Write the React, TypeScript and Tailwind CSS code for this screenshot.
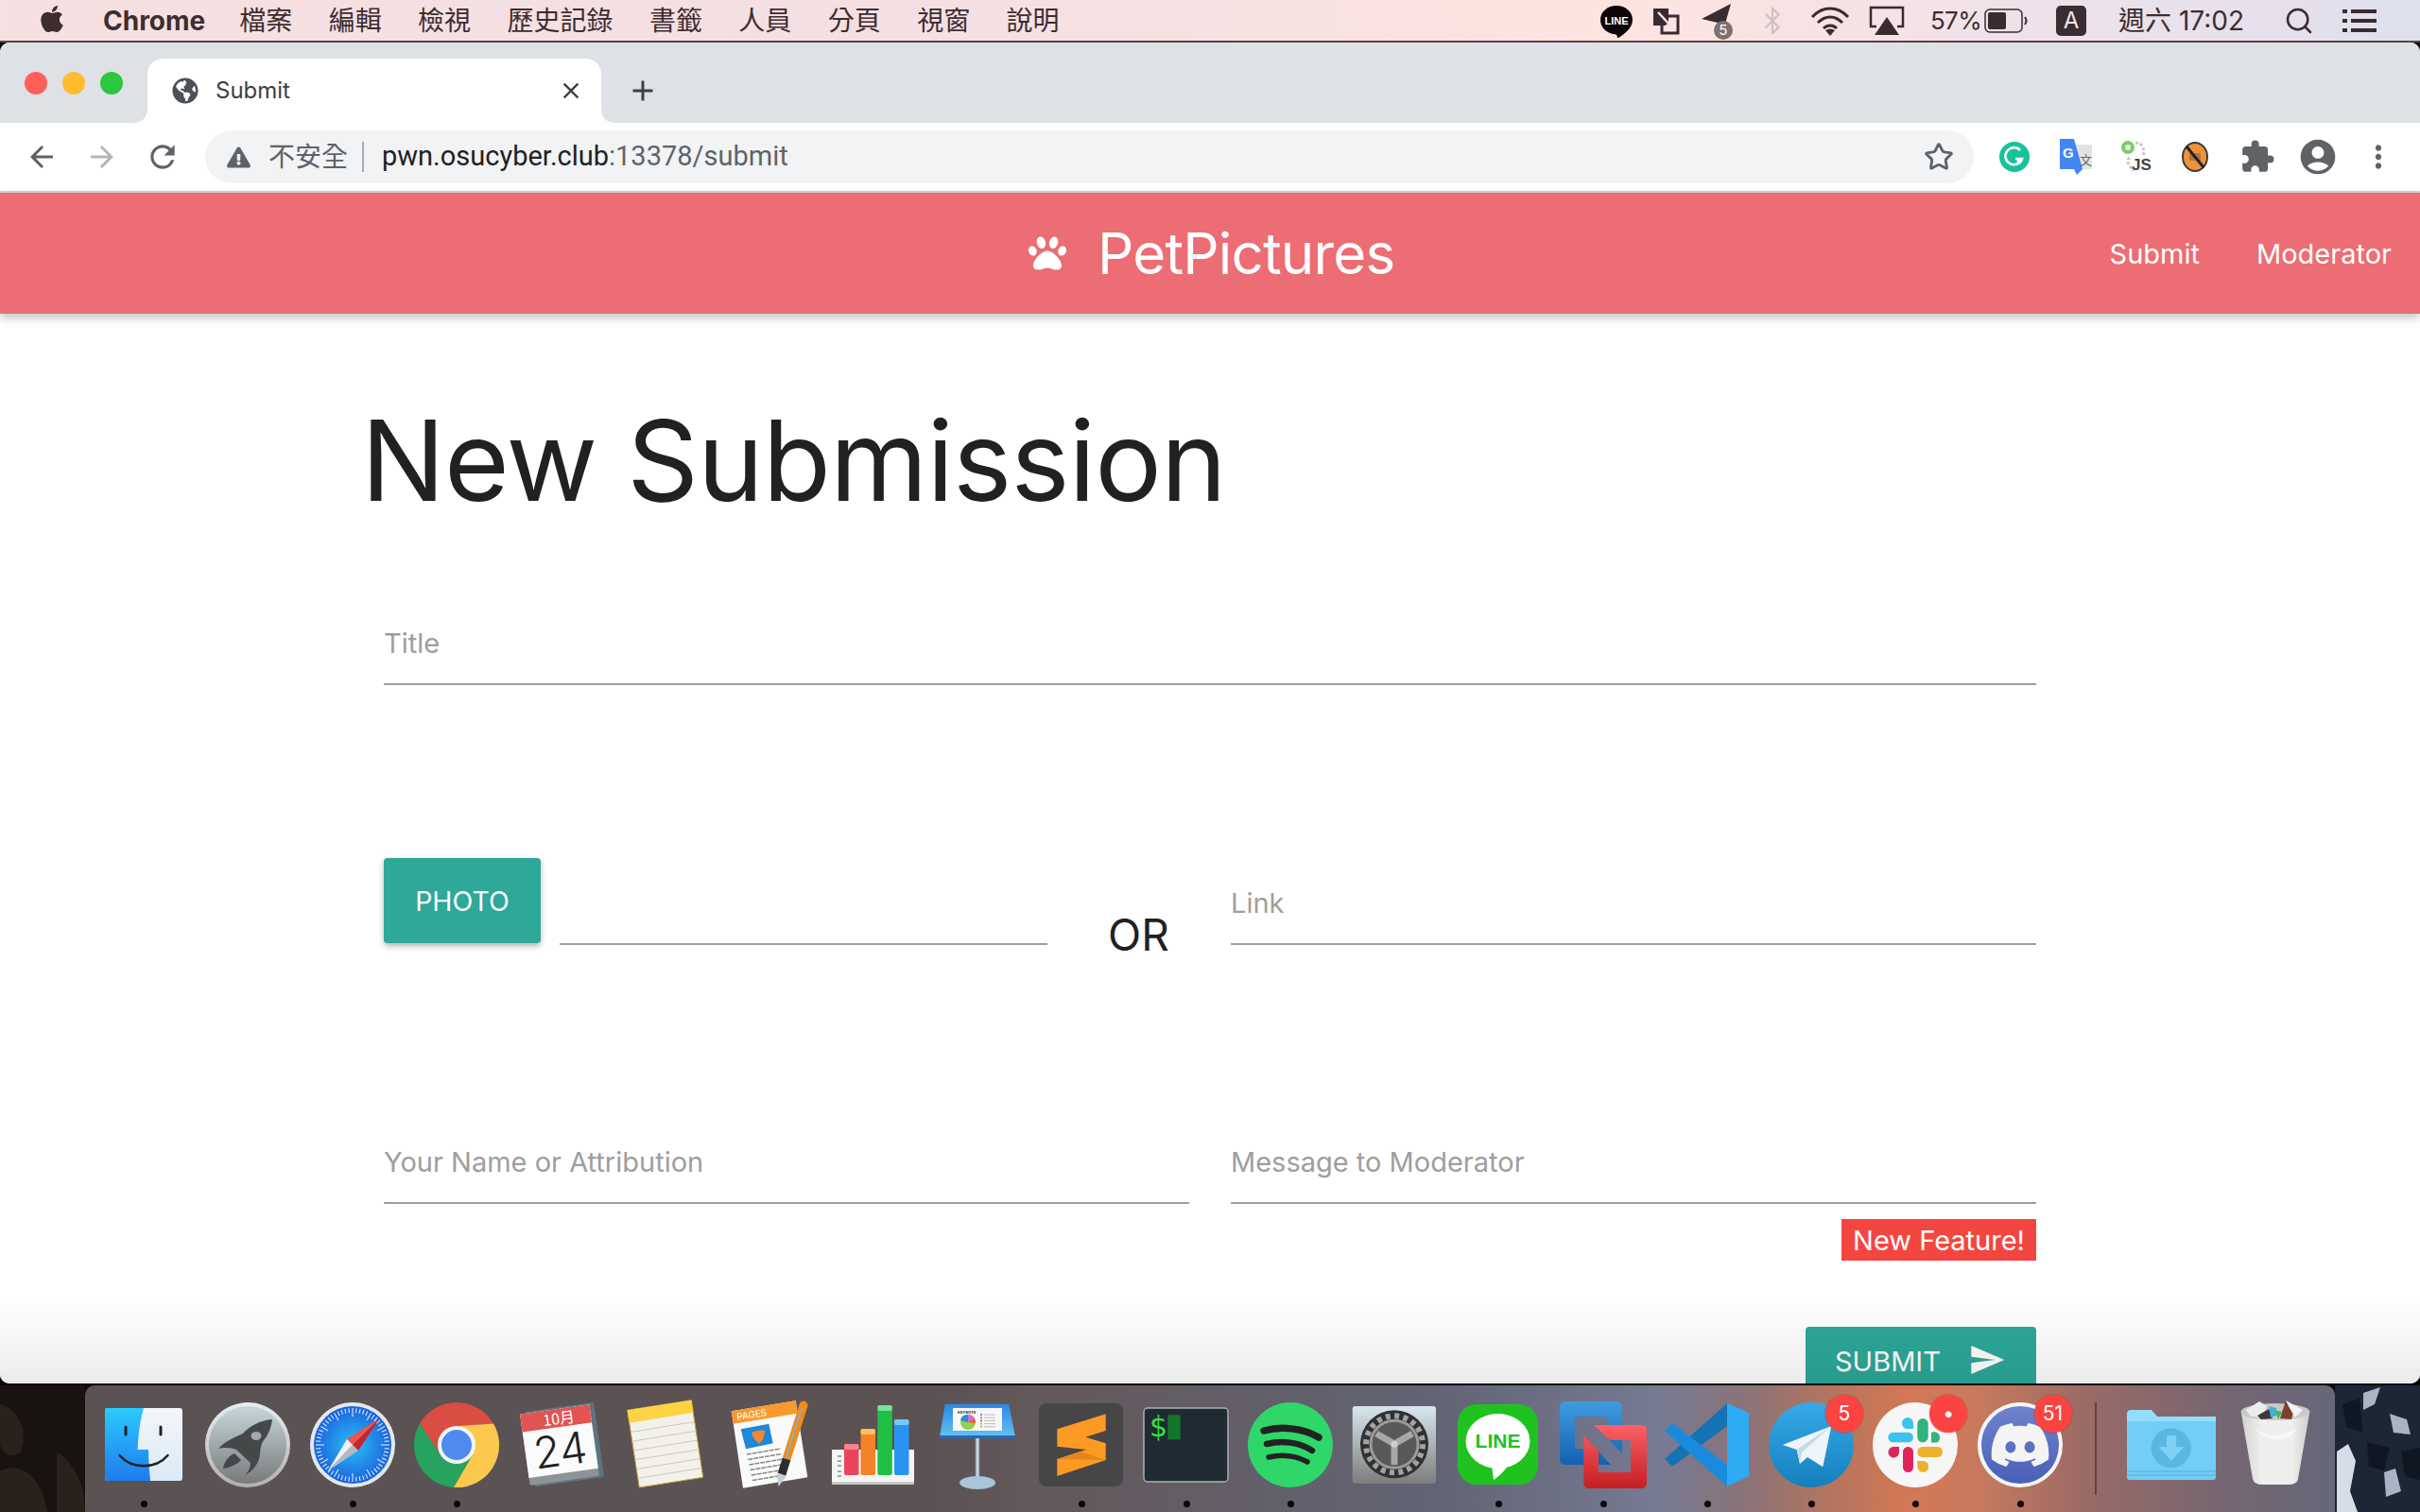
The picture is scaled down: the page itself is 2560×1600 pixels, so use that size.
import React from 'react';
import { FaApple, FaPaw, FaGlobeAmericas, FaDiscord, FaExclamationTriangle } from 'react-icons/fa';
import { MdSend, MdAccountCircle, MdMoreVert, MdRefresh, MdArrowBack, MdArrowForward, MdClose, MdAdd, MdExtension } from 'react-icons/md';
import { Star, Search, Bluetooth } from 'lucide-react';

const menuItems = ['檔案', '編輯', '檢視', '歷史記錄', '書籤', '人員', '分頁', '視窗', '說明'];
const cjk = "font-['Inter','Noto_Sans_CJK_TC',sans-serif]";

const Finder = () => (
  <>
    <defs>
      <linearGradient id="fb" x1="0" y1="0" x2="0" y2="1"><stop offset="0" stopColor="#2bcafd" /><stop offset="1" stopColor="#1f7bef" /></linearGradient>
      <linearGradient id="fw" x1="0" y1="0" x2="0" y2="1"><stop offset="0" stopColor="#f5f6f8" /><stop offset="1" stopColor="#d9eaf7" /></linearGradient>
    </defs>
    <rect x="14" y="24" width="82" height="77" rx="3" fill="url(#fw)" />
    <path d="M17,24 H55 C51,38 49,53 48.7,68 H60 C60,80 61,90 62,101 H17 Q14,101 14,98 V27 Q14,24 17,24Z" fill="url(#fb)" />
    <path d="M36,44 V52 M73,44 V52" stroke="#222" strokeWidth="3" strokeLinecap="round" />
    <path d="M29.5,74 C42,89 68,89 80.5,74" stroke="#222" strokeWidth="2.5" fill="none" strokeLinecap="round" />
  </>
);

const Launchpad = () => (
  <>
    <defs>
      <linearGradient id="lr" x1="0" y1="0" x2="0" y2="1"><stop offset="0" stopColor="#e6eef0" /><stop offset="1" stopColor="#b0b0b0" /></linearGradient>
      <linearGradient id="li" x1="0" y1="0" x2="0" y2="1"><stop offset="0" stopColor="#c6d6da" /><stop offset="1" stopColor="#797a7a" /></linearGradient>
    </defs>
    <circle cx="55" cy="63" r="45" fill="url(#lr)" />
    <circle cx="55" cy="63" r="41" fill="url(#li)" />
    <path d="M81,36 C68,37 57,43 50,51 C42,54 30,60 24,67 C32,65 38,66 43,68 L58,82 C58,88 55,92 52,95 C60,91 66,84 68,74 C68,68 69,62 72,58 C77,52 80,44 81,36Z" fill="#454849" />
    <ellipse cx="64" cy="53.5" rx="5.5" ry="4.5" fill="#a3a9a9" />
    <path d="M29,88 C30,80 36,74 41,72 L48,79 C44,84 36,87 29,88Z" fill="#454849" />
  </>
);

const Safari = () => (
  <>
    <defs>
      <radialGradient id="sb"><stop offset="0" stopColor="#2bc0f5" /><stop offset="1" stopColor="#1a62dd" /></radialGradient>
    </defs>
    <circle cx="55" cy="63" r="45" fill="#e4e8ea" />
    <circle cx="55" cy="63" r="41" fill="url(#sb)" />
    {Array.from({ length: 60 }).map((_, i) => {
      const a = (i * Math.PI) / 30;
      const r0 = i % 5 === 0 ? 30 : 34;
      return (
        <line key={i} x1={55 + r0 * Math.cos(a)} y1={63 + r0 * Math.sin(a)} x2={55 + 39 * Math.cos(a)} y2={63 + 39 * Math.sin(a)} stroke="#fff" strokeWidth="1.2" opacity="0.8" />
      );
    })}
    <polygon points="83.7,34.7 49,57 55,63" fill="#f4504a" />
    <polygon points="83.7,34.7 61,69 55,63" fill="#c8232c" />
    <polygon points="28.7,90.7 49,57 55,63" fill="#f1f1f1" />
    <polygon points="28.7,90.7 61,69 55,63" fill="#b3bac3" />
  </>
);

const Chrome = () => (
  <>
    <path d="M16,40.5 A45,45 0 0 1 94,40.5 L55,43 L37.7,73 Z" fill="#da4d43" />
    <path d="M16,40.5 A45,45 0 0 0 52,108 L72.3,73 L37.7,73 Z" fill="#26a35f" />
    <path d="M94,40.5 A45,45 0 0 1 52,108 L72.3,73 L55,43 Z" fill="#fdc94d" />
    <circle cx="55" cy="63" r="20" fill="#f3f3f3" />
    <circle cx="55" cy="63" r="16" fill="#4f8bee" />
  </>
);

const Calendar = () => (
  <g transform="rotate(-8 55 63)">
    <rect x="22" y="23" width="74" height="80" rx="2" fill="#5e7380" />
    <rect x="17" y="25" width="74" height="76" rx="2" fill="#8d9396" />
    <rect x="17" y="25" width="74" height="68" fill="#fbfbfb" />
    <rect x="17" y="25" width="74" height="19" fill="#e25353" />
    <text x="57" y="41" textAnchor="middle" fontSize="16" fill="#fff" fontFamily="'Noto Sans CJK TC',sans-serif">10月</text>
    <text x="54" y="85" textAnchor="middle" fontSize="46" fill="#222" fontFamily="Inter,sans-serif" fontWeight="300">24</text>
  </g>
);

const Notes = () => (
  <>
    <polygon points="15.7,26.3 83.3,15.7 95.7,97.3 28.3,108" fill="#f3f1ea" stroke="#c6a338" strokeWidth="1" />
    <polygon points="15.7,26.3 83.3,15.7 85.3,28.7 17.7,39.7" fill="#fed344" />
    {Array.from({ length: 6 }).map((_, i) => {
      const t = (i + 1) / 7;
      return (
        <line key={i} x1={17.7 + t * 10.6} y1={39.7 + t * 68.3} x2={85.3 + t * 10.4} y2={28.7 + t * 68.6} stroke="#c9c9c9" strokeWidth="1" />
      );
    })}
  </>
);

const Pages = () => (
  <>
    <polygon points="14.7,27.3 82.7,16.3 95.3,97.3 27,108.7" fill="#fafafa" />
    <polygon points="14.7,27.3 82.7,16.3 84.3,29.7 17,40.7" fill="#f99a2c" />
    <text x="21" y="37" fontSize="10" fill="#fff" transform="rotate(-9 21 37)" fontFamily="Inter,sans-serif">PAGES</text>
    <polygon points="24.7,46.3 54.3,40.7 58.7,61.3 30,67.3" fill="#1e87d8" />
    <path d="M36,50 C40,48 48,47 50,48 C50,54 48,58 44,62 C40,58 37,55 36,50Z" fill="#f4872a" />
    {[0, 1, 2, 3, 4, 5].map(i => (
      <line key={i} x1={31 + i * 1.2} y1={73 + i * 5.5} x2={67 + i * 1.2} y2={67 + i * 5.5} stroke="#888" strokeWidth="1.6" strokeDasharray="5 1" />
    ))}
    <line x1="91" y1="21" x2="73" y2="78" stroke="#f08c1c" strokeWidth="9" strokeLinecap="round" />
    <line x1="89" y1="24" x2="72" y2="78" stroke="#7fb2db" strokeWidth="1.5" />
    <line x1="73" y1="78" x2="68" y2="94" stroke="#2d2d2d" strokeWidth="9" />
    <polygon points="63,93 73,96 64.5,107" fill="#c6ced6" />
  </>
);

const Numbers = () => (
  <>
    <rect x="11" y="68" width="87" height="37" fill="#f5f5f5" />
    <rect x="11" y="102" width="87" height="3" fill="#c8c8c8" />
    {[74, 79, 84, 90, 95].map(y => <rect key={y} x="17" y={y} width="4" height="2" fill="#a5a5a5" />)}
    <rect x="24" y="62" width="15.5" height="33" rx="2" fill="#e8465c" />
    <rect x="24" y="62" width="15.5" height="6" rx="2" fill="#f9858c" />
    <rect x="41.5" y="46" width="15.5" height="49" rx="2" fill="#f58128" />
    <rect x="41.5" y="46" width="15.5" height="6" rx="2" fill="#fcc05e" />
    <rect x="59.3" y="21" width="15.5" height="74" rx="2" fill="#22bf46" />
    <rect x="59.3" y="21" width="15.5" height="6" rx="2" fill="#77e394" />
    <rect x="77" y="36" width="15.5" height="59" rx="2" fill="#2a94f4" />
    <rect x="77" y="36" width="15.5" height="6" rx="2" fill="#71cdf8" />
  </>
);

const Keynote = () => (
  <>
    <defs>
      <linearGradient id="kn" x1="0" y1="0" x2="0" y2="1"><stop offset="0" stopColor="#2c86e2" /><stop offset="1" stopColor="#64c1f4" /></linearGradient>
      <linearGradient id="ks" x1="0" y1="0" x2="1" y2="0"><stop offset="0" stopColor="#7b8f9f" /><stop offset="0.5" stopColor="#dfe6ea" /><stop offset="1" stopColor="#7b8f9f" /></linearGradient>
    </defs>
    <rect x="52.7" y="55" width="4.6" height="46" fill="url(#ks)" />
    <ellipse cx="55" cy="103" rx="19" ry="7" fill="#a9c5d8" />
    <polygon points="20.7,19.7 88.3,19.7 95,54.7 15,54.7" fill="url(#kn)" />
    <rect x="15" y="53" width="80" height="3" fill="#1a6cc6" />
    <rect x="29" y="24" width="52" height="24" fill="#f7f7f7" />
    <text x="34" y="30" fontSize="4" fontWeight="700" fill="#333" fontFamily="Inter,sans-serif">KEYNOTE</text>
    <circle cx="45" cy="39" r="8" fill="#8fd04f" />
    <path d="M45,39 L37,37 A8,8 0 0 1 45,31Z" fill="#2e87dd" />
    <path d="M45,39 L45,31 A8,8 0 0 1 52,35Z" fill="#d66bd6" />
    <path d="M45,39 L52,35 A8,8 0 0 1 53,40Z" fill="#f2554e" />
    {['#3c9be0', '#d66bd6', '#f2554e', '#f4a83a', '#8fd04f'].map((c, i) => (
      <g key={c}>
        <rect x="58" y={30 + i * 3.2} width="2" height="2" fill={c} />
        <rect x="62" y={30.5 + i * 3.2} width="12" height="1" fill="#bbb" />
      </g>
    ))}
  </>
);

const Sublime = () => (
  <>
    <rect x="10" y="19" width="89" height="88" rx="8" fill="#464646" />
    <polygon points="29.3,46.3 80.7,30.3 80.7,48 59.3,54.7 80.7,61.3 80.7,79 29.3,96 29.3,78 60,68 29.3,64.7" fill="#fd9a23" />
    <polygon points="29.3,78 54,70 80.7,79 80.7,79" fill="#e4861d" />
  </>
);

const Terminal = () => (
  <>
    <rect x="10" y="24" width="89" height="78" rx="4" fill="#1f2a33" stroke="#aab1b6" strokeWidth="1.5" />
    <text x="16" y="54" fontSize="30" fill="#37e03f" fontFamily="'DejaVu Sans',sans-serif">$</text>
    <rect x="35.3" y="31.3" width="13.4" height="26" fill="#14752a" />
  </>
);

const Spotify = () => (
  <>
    <circle cx="55" cy="63" r="45" fill="#2fd768" />
    <path d="M27,48 C45,43 68,45 85,55" stroke="#222" strokeWidth="7.5" fill="none" strokeLinecap="round" />
    <path d="M30,62 C46,58 64,60 78,69" stroke="#222" strokeWidth="6.5" fill="none" strokeLinecap="round" />
    <path d="M32,76 C45,73 60,74 73,81" stroke="#222" strokeWidth="5.5" fill="none" strokeLinecap="round" />
  </>
);

const SystemPrefs = () => (
  <>
    <defs>
      <linearGradient id="sp" x1="0" y1="0" x2="0" y2="1"><stop offset="0" stopColor="#d8e6ec" /><stop offset="1" stopColor="#7d7d7d" /></linearGradient>
    </defs>
    <rect x="10.7" y="22" width="88.3" height="82" rx="3" fill="url(#sp)" />
    <circle cx="55" cy="62.3" r="36" fill="#2f3133" />
    <circle cx="55" cy="62.3" r="30" fill="none" stroke="#a3a3a3" strokeWidth="6" strokeDasharray="5 4.42" />
    <circle cx="55" cy="62.3" r="25" fill="#595959" stroke="#9b9b9b" strokeWidth="3" />
    <path d="M55,62 L55,40 M55,62 L36,73 M55,62 L74,73" stroke="#a8a8a8" strokeWidth="7" transform="rotate(60 55 62)" />
    <circle cx="55" cy="62.3" r="3.5" fill="#d0d0d0" />
  </>
);

const Line = () => (
  <>
    <rect x="12" y="20" width="85" height="85" rx="20" fill="#1fc21f" />
    <ellipse cx="54.5" cy="59" rx="34" ry="29" fill="#fff" />
    <path d="M48,84 L50,100 C56,96 62,90 66,84Z" fill="#fff" />
    <text x="54.5" y="66" textAnchor="middle" fontSize="21" fontWeight="800" fill="#1fc21f" fontFamily="'Liberation Sans',sans-serif">LINE</text>
  </>
);

const VMware = () => (
  <>
    <defs>
      <linearGradient id="vb" x1="0" y1="0" x2="0" y2="1"><stop offset="0" stopColor="#3f9ce2" /><stop offset="1" stopColor="#1560b0" /></linearGradient>
      <linearGradient id="vr" x1="0" y1="0" x2="0" y2="1"><stop offset="0" stopColor="#fc6068" /><stop offset="1" stopColor="#c51e22" /></linearGradient>
    </defs>
    <path d="M15,17 H69 Q75,17 75,23 V72 L59,56 V33 H25 V67 H47 L63,84 H15 Q9,84 9,78 V23 Q9,17 15,17Z" fill="url(#vb)" />
    <path d="M34.3,53 L50,69 V92 H84 V58 H62 L45,42 H95 Q101,42 101,48 V103 Q101,109 95,109 H40 Q34.3,109 34.3,103Z" fill="url(#vr)" />
  </>
);

const VSCode = () => (
  <>
    <polygon points="10,78 18,86 76,43 76,19" fill="#1572b5" />
    <polygon points="10,48 18,40 76,84 76,107 " fill="#1a8bdc" />
    <polygon points="76,19 99,29 99,96 76,107" fill="#2fabf5" />
  </>
);

const Telegram = () => (
  <>
    <defs>
      <linearGradient id="tg" x1="0" y1="0" x2="0" y2="1"><stop offset="0" stopColor="#38a9e7" /><stop offset="1" stopColor="#1480bd" /></linearGradient>
    </defs>
    <circle cx="55" cy="63" r="45" fill="url(#tg)" />
    <polygon points="76.3,43 24.7,63 39.7,68 43,83 51,76 67.3,86.3" fill="#eef6fb" />
    <polygon points="76.3,43 39.7,68 43,83 45,71" fill="#c6dbe9" />
  </>
);

const Slack = () => (
  <>
    <circle cx="55" cy="63" r="45" fill="#f6f6f6" />
    <rect x="26.3" y="49.7" width="26.7" height="10.6" rx="5.3" fill="#3ec1ee" />
    <path d="M41,40 a5.8,5.8 0 1 1 12,0 V46 H46 A5.5,5.5 0 0 1 41,40Z" fill="#3ec1ee" />
    <rect x="57.3" y="35" width="11.4" height="25.3" rx="5.7" fill="#30b37c" />
    <path d="M72,50 a5.8,5.8 0 1 1 6,10.5 H72Z" fill="#30b37c" />
    <path d="M38,65 V70 A5.8,5.8 0 1 1 32,65Z" fill="#e0245e" />
    <rect x="42" y="65" width="11" height="27" rx="5.5" fill="#e0245e" />
    <rect x="57.3" y="65" width="26.7" height="11" rx="5.5" fill="#ecb22e" />
    <path d="M57.3,80 H63 A6,6 0 1 1 57.3,86Z" fill="#ecb22e" />
  </>
);

const Discord = () => (
  <>
    <defs>
      <linearGradient id="dc" x1="0" y1="0" x2="0" y2="1"><stop offset="0" stopColor="#6d83cc" /><stop offset="1" stopColor="#4a60b8" /></linearGradient>
    </defs>
    <circle cx="55" cy="63" r="45" fill="#f5f5f5" />
    <circle cx="55" cy="63" r="41" fill="url(#dc)" />
    <FaDiscord x="22" y="30" size={66} color="#f4f4f4" />
  </>
);

const Folder = () => (
  <>
    <path d="M8,30 Q8,26 12,26 H34 L40,33 H102 V44 H8Z" fill="#93deff" />
    <path d="M8,40 Q8,38 10,38 H100 Q102,38 102,40 V97 Q102,100 99,100 H11 Q8,100 8,97Z" fill="#72cdf7" />
    <rect x="8" y="90" width="94" height="2" fill="#62bde9" />
    <rect x="8" y="94" width="94" height="2" fill="#62bde9" />
    <circle cx="54.7" cy="66.3" r="21" fill="#5cb6e4" />
    <path d="M50,53 H60 V65 H68 L55,80 L42,65 H50Z" fill="#7fd0f5" />
  </>
);

const Trash = () => (
  <>
    <defs>
      <linearGradient id="tr" x1="0" y1="0" x2="1" y2="0"><stop offset="0" stopColor="#d2d2d2" /><stop offset="0.3" stopColor="#efefee" /><stop offset="0.75" stopColor="#eeeeed" /><stop offset="1" stopColor="#cfcfcf" /></linearGradient>
    </defs>
    <path d="M18.7,28 C18,26 92,26 91.3,28 L79,99 Q78,105 68,105 H42 Q32,105 31,99Z" fill="url(#tr)" />
    <ellipse cx="55" cy="28" rx="36.5" ry="9" fill="#c9c9c9" />
    <polygon points="24,26 38,17 46,22 42,35 28,32" fill="#ededed" />
    <polygon points="36,32 48,25 52,35 40,36" fill="#40373a" />
    <polygon points="48,22 56,24 56,32 50,34" fill="#3bb3d6" />
    <polygon points="60,35 66,16 74,28 72,36" fill="#7e3f30" />
    <polygon points="66,16 84,26 76,34 70,24" fill="#f3f3f3" />
    <polygon points="54,26 62,28 58,36" fill="#4fb45b" />
    <path d="M34,47 C50,55 62,55 78,45 L74,51 C60,61 46,59 34,47Z" fill="#fafafa" opacity="0.8" />
  </>
);

const dockItems: { icon: React.ReactNode; dot?: boolean; badge?: string }[] = [
  { icon: <Finder />, dot: true },
  { icon: <Launchpad /> },
  { icon: <Safari />, dot: true },
  { icon: <Chrome />, dot: true },
  { icon: <Calendar /> },
  { icon: <Notes /> },
  { icon: <Pages /> },
  { icon: <Numbers /> },
  { icon: <Keynote /> },
  { icon: <Sublime />, dot: true },
  { icon: <Terminal />, dot: true },
  { icon: <Spotify />, dot: true },
  { icon: <SystemPrefs /> },
  { icon: <Line />, dot: true },
  { icon: <VMware />, dot: true },
  { icon: <VSCode />, dot: true },
  { icon: <Telegram />, dot: true, badge: '5' },
  { icon: <Slack />, dot: true, badge: '•' },
  { icon: <Discord />, dot: true, badge: '51' },
];

const DockSlot = ({ icon, dot, badge }: { icon: React.ReactNode; dot?: boolean; badge?: string }) => (
  <div className="relative w-[110.25px] h-[134px] shrink-0">
    <svg width="110" height="134" viewBox="0 0 110 134">{icon}</svg>
    {dot && <div className="absolute left-[52px] top-[122px] w-[7px] h-[7px] rounded-full bg-[#0c0606]" />}
    {badge && (
      <div className="absolute left-[70px] top-[10px] w-[40px] h-[40px] rounded-full bg-[#fb4441] text-white text-[21px] flex items-center justify-center font-['Inter',sans-serif] shadow-[0_0_2px_rgba(0,0,0,0.3)]">
        {badge}
      </div>
    )}
  </div>
);

const Field = ({ label, className = '' }: { label: string; className?: string }) => (
  <div className={`h-[96px] border-b-2 border-[#9e9e9e] flex items-center pt-[9px] text-[29px] text-[#9e9e9e] ${className}`}>
    {label}
  </div>
);

const MenuBar = () => (
  <div className={`h-[45px] shrink-0 border-b-2 border-[#5b4247] flex items-center text-[#3d2d30] bg-[linear-gradient(90deg,#f6e0e1_0%,#f4dfe3_35%,#f9e2e2_55%,#fee4df_66%,#f3e2e8_80%,#dfe0ee_100%)] ${cjk}`}>
    <FaApple className="ml-[40px] w-[30px] h-[32px] -mt-[3px]" />
    <span className="ml-[39px] text-[28px] font-bold">Chrome</span>
    <div className="flex gap-[38.4px] ml-[36px] text-[28px]">
      {menuItems.map(m => <span key={m} className="leading-none">{m}</span>)}
    </div>
    <div className="ml-auto flex items-center h-full">
      <svg width="36" height="36" viewBox="0 0 36 36" className="mr-[20px]">
        <path d="M18,2 C27,2 35,8 35,17 C35,27 24,33 19,37 C19,33 18,32 14,32 C6,30 1,24 1,17 C1,8 9,2 18,2Z" fill="#0d0507" />
        <text x="18" y="22" textAnchor="middle" fontSize="11" fontWeight="700" fill="#fff" fontFamily="'Liberation Sans',sans-serif">LINE</text>
      </svg>
      <svg width="30" height="32" viewBox="0 0 30 32" className="mr-[21px]">
        <path d="M1,3 H17 V21 H1Z" fill="#3a2b30" />
        <path d="M10,11 H27 V29 H10Z" fill="none" stroke="#3a2b30" strokeWidth="3" />
        <path d="M6,7 L20,22 M14,21 H20 V15" stroke="#f7e3e3" strokeWidth="2.5" fill="none" />
      </svg>
      <div className="relative w-[34px] h-[40px] mr-[26px]">
        <svg width="34" height="30" viewBox="0 0 34 30"><path d="M1,18 L32,2 L24,30 L18,22Z" fill="#3a2b30" /></svg>
        <span className="absolute left-[14px] top-[20px] w-[20px] h-[20px] rounded-full bg-[#7f7070] text-[15px] leading-[20px] text-center text-white font-['Inter',sans-serif]">5</span>
      </div>
      <Bluetooth size={32} strokeWidth={1.6} className="text-[#cdbfc3] mr-[23px]" />
      <svg width="44" height="32" viewBox="0 0 44 32" className="mr-[19px]">
        <path d="M3,12 C14,0 30,0 41,12 M9,18 C17,10 27,10 35,18 M15,24 C19,20 25,20 29,24" stroke="#3a2b30" strokeWidth="3" fill="none" />
        <path d="M22,32 L17,26 Q22,23 27,26Z" fill="#3a2b30" />
      </svg>
      <svg width="38" height="32" viewBox="0 0 38 32" className="mr-[27px]">
        <path d="M8,22 H2 V2 H36 V22 H30" stroke="#3a2b30" strokeWidth="2.5" fill="none" />
        <polygon points="19,12 32,31 6,31" fill="#3a2b30" />
      </svg>
      <span className="text-[26px] mr-[3px] tracking-tight">57%</span>
      <svg width="46" height="26" viewBox="0 0 46 26" className="mr-[30px]">
        <rect x="1" y="1" width="39" height="24" rx="5" fill="none" stroke="#3a2b30" strokeWidth="1.5" />
        <rect x="4" y="4" width="19" height="18" rx="2" fill="#3a2b30" />
        <path d="M43,9 Q46,13 43,17" stroke="#3a2b30" strokeWidth="2" fill="none" />
      </svg>
      <span className="w-[32px] h-[32px] rounded-[5px] bg-[#3a2d32] text-[#f3e6ea] text-[24px] flex items-center justify-center mr-[34px]">A</span>
      <span className="text-[28px] leading-none mr-[42px] whitespace-nowrap">週六 17:02</span>
      <Search size={32} strokeWidth={1.9} className="text-[#3a2b30] mr-[30px]" />
      <svg width="36" height="26" viewBox="0 0 36 26" className="mr-[46px]">
        <path d="M0,3 H5 M9,3 H36 M0,13 H5 M9,13 H36 M0,23 H5 M9,23 H36" stroke="#3a2b30" strokeWidth="4" />
      </svg>
    </div>
  </div>
);

const TabStrip = () => (
  <div className="h-[85px] shrink-0 bg-[#dee1e6] flex items-end">
    <div className="flex gap-[16px] w-[156px] h-full pl-[26px] items-center shrink-0">
      <div className="w-[24px] h-[24px] rounded-full bg-[#fe5f58]" />
      <div className="w-[24px] h-[24px] rounded-full bg-[#febc2e]" />
      <div className="w-[24px] h-[24px] rounded-full bg-[#2bc83f]" />
    </div>
    <div className="relative w-[480px] h-[68px] bg-white rounded-t-[16px] flex items-center pl-[26px] font-['Inter',sans-serif]">
      <svg width="16" height="16" viewBox="0 0 16 16" className="absolute -left-[16px] bottom-0"><path d="M16,0 V16 H0 Q16,16 16,0Z" fill="#fff" /></svg>
      <svg width="16" height="16" viewBox="0 0 16 16" className="absolute -right-[16px] bottom-0"><path d="M0,0 V16 H16 Q0,16 0,0Z" fill="#fff" /></svg>
      <FaGlobeAmericas size={28} color="#4c5157" />
      <span className="ml-[18px] text-[24px] text-[#3c4043]">Submit</span>
      <MdClose size={28} color="#3c4043" className="ml-auto mr-[18px]" />
    </div>
    <MdAdd size={36} color="#3c4043" className="ml-[26px] mb-[16px]" />
  </div>
);

const Toolbar = () => (
  <div className="h-[74px] shrink-0 bg-white border-b-2 border-[#d6d6d6] flex items-center font-['Roboto',sans-serif]">
    <MdArrowBack size={36} color="#5f6368" className="ml-[26px]" />
    <MdArrowForward size={36} color="#b4b6b9" className="ml-[28px]" />
    <MdRefresh size={38} color="#5f6368" className="ml-[27px]" />
    <div className="ml-[26px] w-[1871px] h-[56px] rounded-full bg-[#f1f3f4] flex items-center pl-[23px] shrink-0">
      <FaExclamationTriangle size={25} color="#5f6368" />
      <span className={`ml-[19px] text-[28px] text-[#5f6368] ${cjk}`}>不安全</span>
      <div className="w-[2px] h-[32px] bg-[#a9acb0] ml-[15px]" />
      <span className="ml-[19px] text-[29px] text-[#202124] whitespace-nowrap">pwn.osucyber.club<span className="text-[#5f6368]">:13378/submit</span></span>
      <Star size={32} strokeWidth={2.2} color="#5f6368" className="ml-auto mr-[21px]" />
    </div>
    <svg width="32" height="32" viewBox="0 0 32 32" className="ml-[27px] shrink-0">
      <circle cx="16" cy="16" r="16" fill="#15c39a" />
      <path d="M22,9 A9,9 0 1 0 24,18 H17 M20,18 V24" stroke="#fff" strokeWidth="2.6" fill="none" />
    </svg>
    <svg width="34" height="38" viewBox="0 0 34 38" className="ml-[32px] shrink-0">
      <rect x="14" y="6" width="20" height="26" fill="#e3e3e3" />
      <path d="M0,0 H15 L24,32 L18,38 L15,32 H0Z" fill="#4285f4" />
      <text x="3" y="20" fontSize="15" fontWeight="700" fill="#fff" fontFamily="'Liberation Sans',sans-serif">G</text>
      <text x="21" y="27" fontSize="13" fill="#666" fontFamily="'Noto Sans CJK TC',sans-serif">文</text>
    </svg>
    <svg width="34" height="38" viewBox="0 0 34 38" className="ml-[30px] shrink-0">
      <circle cx="8" cy="9" r="7" fill="#7fc96e" />
      <circle cx="8" cy="9" r="3" fill="#e8f5e4" />
      <path d="M16,4 C24,4 26,12 24,18 M10,20 C4,24 12,30 14,34" stroke="#c9c9c9" strokeWidth="3" fill="none" strokeDasharray="3 2" />
      <text x="12" y="33" fontSize="17" fontWeight="700" fill="#444" fontFamily="'Liberation Sans',sans-serif">JS</text>
    </svg>
    <svg width="28" height="32" viewBox="0 0 28 32" className="ml-[31px] shrink-0">
      <ellipse cx="14" cy="16" rx="13" ry="15" fill="#f0923a" stroke="#3a3a3a" strokeWidth="2" />
      <rect x="8" y="12" width="12" height="8" fill="#b2763e" />
      <line x1="5" y1="5" x2="23" y2="27" stroke="#222" strokeWidth="3" />
    </svg>
    <MdExtension size={38} color="#5f6368" className="ml-[33px] shrink-0" />
    <MdAccountCircle size={44} color="#5f6368" className="ml-[23px] shrink-0" />
    <MdMoreVert size={38} color="#5f6368" className="ml-[23px] shrink-0" />
  </div>
);

const Navbar = () => (
  <div className="relative z-10 h-[128px] shrink-0 bg-[#ec6d74] shadow-[0_4px_10px_rgba(0,0,0,0.25)] flex items-center text-white font-['Inter',sans-serif]">
    <FaPaw size={40} className="ml-[1088px]" />
    <span className="ml-[33px] text-[60px] leading-none tracking-[-0.8px]">PetPictures</span>
    <div className="ml-auto flex gap-[60px] text-[29px] pr-[30px] pt-[2px]">
      <span>Submit</span>
      <span>Moderator</span>
    </div>
  </div>
);

const Form = () => (
  <div className="relative flex-1 overflow-hidden bg-white font-['Inter',sans-serif]">
    <h1 className="mt-[85px] ml-[382px] h-[140px] text-[118px] leading-[140px] font-normal tracking-[-1px] text-[#212121] whitespace-nowrap">New Submission</h1>
    <div className="mt-[72px] mx-[406px] flex flex-col">
      <Field label="Title" />
      <div className="mt-[179px] grid grid-cols-2 gap-x-[44px] items-end">
        <div className="flex items-end">
          <div className="w-[166px] h-[90px] mb-[2px] pt-[2px] rounded-[4px] bg-[#2da899] text-white text-[28.5px] flex items-center justify-center shadow-[0_3px_6px_rgba(0,0,0,0.3)]">PHOTO</div>
          <div className="flex-1 h-[2px] bg-[#9e9e9e] ml-[20px]" />
          <div className="ml-[64px] w-[86px] -mb-[17px] text-[46px] leading-[56px] text-[#212121]">OR</div>
        </div>
        <Field label="Link" />
      </div>
      <div className="mt-[178px] grid grid-cols-2 gap-x-[44px]">
        <Field label="Your Name or Attribution" />
        <Field label="Message to Moderator" />
      </div>
      <div className="mt-[16px] self-end h-[44px] w-[206px] pt-[2px] bg-[#f44640] text-white text-[29px] flex items-center justify-center whitespace-nowrap">New Feature!</div>
      <div className="mt-[70px] self-end w-[244px] h-[90px] rounded-[4px] bg-[#2da899] text-white text-[29px] flex items-start pt-[15px] pl-[31px]">
        SUBMIT
        <MdSend size={40} className="ml-[29px]" />
      </div>
    </div>
    <div className="absolute inset-x-0 bottom-0 h-[90px] bg-[linear-gradient(180deg,rgba(0,0,0,0)_0%,rgba(0,0,0,0.08)_100%)]" />
  </div>
);

const Dock = () => (
  <div className="h-[136px] shrink-0 pt-[2px] flex bg-[#0a0808]">
    <svg width="90" height="134" viewBox="0 0 90 134" className="shrink-0">
      <rect width="90" height="134" fill="#181210" />
      <path d="M0,20 C20,25 30,50 22,70 C10,80 0,70 0,60Z M0,90 C25,80 45,100 50,134 H0Z M60,70 C75,80 90,100 90,134 H60Z" fill="#2a211d" />
    </svg>
    <div className="flex-1 flex pl-[7px] rounded-t-[10px] bg-[linear-gradient(90deg,#5b5254_0%,#5b5254_38%,#63585a_42%,#626474_60%,#767a93_70%,#8c7376_74%,#b8755d_78%,#d37856_81%,#c97a5e_84%,#9a6a66_89%,#756671_95%,#66677a_100%)]">
      {dockItems.map((it, i) => <DockSlot key={i} icon={it.icon} dot={it.dot} badge={it.badge} />)}
      <div className="w-[50px] h-full shrink-0 flex justify-center pt-[18px]">
        <div className="w-[2px] h-[98px] bg-[#6b3f3f]" />
      </div>
      <DockSlot icon={<Folder />} />
      <DockSlot icon={<Trash />} />
    </div>
    <svg width="90" height="134" viewBox="0 0 90 134" className="shrink-0">
      <rect width="90" height="134" fill="#1c2634" />
      <path d="M2,70 L14,62 L22,80 L16,112 L24,134 H2Z" fill="#d7dde6" />
      <path d="M30,8 L48,2 L42,20 L30,26Z M58,30 L76,36 L80,52 L62,50Z M52,92 L64,88 L70,112 L54,118Z" fill="#aab4c4" />
      <path d="M8,20 L26,14 L30,50 L12,44Z M34,60 L58,66 L52,90 L36,86Z M70,70 L90,66 V100 L74,96Z" fill="#0f1722" />
    </svg>
  </div>
);

export default function App() {
  return (
    <div className="w-[2560px] h-[1600px] flex flex-col overflow-hidden bg-[#0a0808]">
      <MenuBar />
      <div className="h-[1419px] shrink-0 flex flex-col rounded-t-[10px] rounded-b-[10px] overflow-hidden bg-white">
        <TabStrip />
        <Toolbar />
        <Navbar />
        <Form />
      </div>
      <Dock />
    </div>
  );
}
